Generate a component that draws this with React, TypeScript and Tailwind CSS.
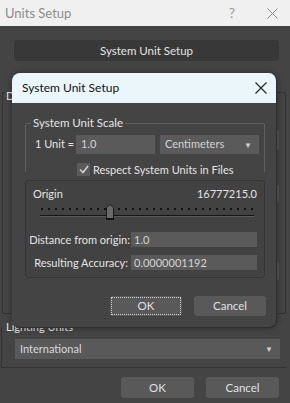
import React from "react";

const font = { fontFamily: 'Lato, "Liberation Sans", sans-serif' };

function Slider() {
  const dots = [];
  for (let x = 40; x <= 254; x += 7) dots.push(x);
  return (
    <svg width="240" height="20" viewBox="0 0 240 20" className="block">
      {dots.map((x) => (
        <rect key={x} x={x - 25} y={4} width={2} height={2} fill="#111" />
      ))}
      <rect x={14} y={11} width={214} height={1} fill="#151515" />
      <rect x={14} y={12} width={214} height={1} fill="#5a5a5a" />
      <path d="M80.5 3.5 L84 0.5 L87.5 3.5 L87.5 15.5 L80.5 15.5 Z" fill="#6a6a6a" stroke="#1a1a1a" strokeWidth="1" />
      <rect x={80} y={14} width={8} height={2} fill="#111" />
    </svg>
  );
}

export default function App() {
  return (
    <div
      className="relative w-[290px] h-[403px] overflow-hidden bg-[#444444] text-[#dedede] whitespace-nowrap"
      style={font}
    >
      {/* Window title bar */}
      <div className="h-[26px] bg-[#f0f0f0] flex items-center pl-[5px] pr-[12px]">
        <span className="text-[13px] text-[#8c8c8c] leading-none">Units Setup</span>
        <span className="ml-auto text-[14px] text-[#9a9a9a] leading-none mr-[32px]">?</span>
        <svg width="11" height="11" viewBox="0 0 11 11">
          <path d="M0.5 0.5 L10.5 10.5 M10.5 0.5 L0.5 10.5" stroke="#888" strokeWidth="1" />
        </svg>
      </div>

      {/* Main body */}
      <div className="flex flex-col">
        <div className="mx-[14px] mt-[14px] h-[21px] w-[265px] rounded-[3px] bg-[#383838] flex items-center justify-center text-[11.5px] text-[#e4e4e4]">
          System Unit Setup
        </div>

        {/* Display Unit Scale group (mostly hidden) */}
        <div className="relative mt-[31px] ml-[2px] w-[284px] h-[222px] border border-[#333333] rounded-[2px]">
          <span className="absolute -top-[6px] left-[2px] bg-[#444444] px-[1px] text-[11px] text-[#e4e4e4] leading-[18px]">
            Display Unit Scale
          </span>
          <div className="flex flex-col items-end pr-[6px] pt-[37px] gap-[35px]">
            <div className="w-[60px] h-[20px] bg-[#555555] rounded-[2px]" />
            <div className="w-[60px] h-[18px] bg-[#555555] rounded-[2px]" />
            <div className="w-[60px] h-[18px] bg-[#555555] rounded-[2px] mt-[24px]" />
          </div>
        </div>

        {/* Lighting Units group */}
        <div className="relative mt-[14px] ml-[1px] w-[286px] h-[40px] border-b border-l border-[#333333]">
          <span className="absolute -top-[10px] left-[4px] text-[11px] text-[#e4e4e4] leading-[18px]">
            Lighting Units
          </span>
          <div className="mt-[11px] ml-[13px] w-[265px] h-[20px] bg-[#595959] flex items-center pl-[5px] pr-[7px] text-[11px] text-[#d8d8d8]">
            International
            <span className="ml-auto text-[8px] text-[#cfcfcf]">▼</span>
          </div>
        </div>

        <div className="flex justify-end gap-[12px] mt-[9px] pr-[11px]">
          <div className="w-[73px] h-[21px] rounded-[3px] bg-[#595959] flex items-center justify-center text-[11.5px] text-[#e0e0e0]">
            OK
          </div>
          <div className="w-[73px] h-[21px] rounded-[3px] bg-[#595959] flex items-center justify-center text-[11.5px] text-[#e0e0e0]">
            Cancel
          </div>
        </div>
      </div>

      {/* Modal dialog */}
      <div className="absolute left-[12px] top-[73px] w-[265px] h-[255px] rounded-[8px] overflow-hidden bg-[#444444] border-r border-b border-[#2e2e2e] shadow-[0_0_6px_rgba(0,0,0,0.35)] flex flex-col">
        <div className="h-[30px] bg-[#eaf6f9] flex items-center pl-[10px] pr-[9px] shrink-0">
          <span className="text-[12px] text-[#111] leading-none">System Unit Setup</span>
          <svg className="ml-auto" width="12" height="12" viewBox="0 0 12 12">
            <path d="M0.5 0.5 L11.5 11.5 M11.5 0.5 L0.5 11.5" stroke="#222" strokeWidth="1.1" />
          </svg>
        </div>

        <div className="flex flex-col pl-[13px]">
          {/* System Unit Scale group */}
          <div className="relative mt-[20px] w-[240px] h-[49px] border-t border-l border-r border-[#5e5e5e] rounded-t-[2px]">
            <span className="absolute -top-[10px] left-[5px] bg-[#444444] px-[2px] text-[11.5px] text-[#e4e4e4] leading-[18px]">
              System Unit Scale
            </span>
            <div className="flex items-center mt-[11px] h-[19px]">
              <span className="ml-[9px] w-[41px] shrink-0 text-[11px] text-[#e4e4e4]">1 Unit =</span>
              <div className="w-[79px] h-[19px] shrink-0 bg-[#5a5a5a] flex items-center pl-[5px] text-[11px] text-[#d4d4d4]">
                1.0
              </div>
              <div className="ml-[5px] w-[99px] h-[19px] shrink-0 bg-[#5a5a5a] flex items-center pl-[5px] pr-[7px] text-[11px] text-[#d4d4d4]">
                Centimeters
                <span className="ml-auto text-[8px] text-[#cfcfcf]">▼</span>
              </div>
            </div>
            <div className="flex items-center mt-[9px] ml-[51px] h-[13px]">
              <div className="w-[13px] h-[13px] bg-[#5a5a5a] flex items-center justify-center shrink-0">
                <svg width="10" height="9" viewBox="0 0 10 9">
                  <path d="M1 4.5 L4 7.5 L9 1" stroke="#cfcfcf" strokeWidth="1.6" fill="none" />
                </svg>
              </div>
              <span className="ml-[3px] text-[11px] text-[#e4e4e4] leading-none">Respect System Units in Files</span>
            </div>
          </div>

          {/* Origin box */}
          <div className="mt-[8px] w-[240px] h-[98px] border border-[#363636] rounded-[3px] bg-[#424242] flex flex-col">
            <div className="flex items-center justify-between pl-[7px] pr-[7px] mt-[5px] h-[16px] text-[11px] text-[#e4e4e4]">
              <span>Origin</span>
              <span>16777215.0</span>
            </div>
            <div className="mt-[2px]">
              <Slider />
            </div>
            <div className="flex items-center mt-[8px] h-[15px]">
              <div className="w-[104px] shrink-0 flex justify-end text-[11px] text-[#e4e4e4] leading-none">
                <span>Distance from origin:</span>
              </div>
              <div className="ml-[1px] w-[126px] h-[15px] bg-[#5a5a5a] flex items-center pl-[3px] text-[11px] text-[#d4d4d4] leading-none">
                1.0
              </div>
            </div>
            <div className="flex items-center mt-[8px] h-[15px]">
              <div className="w-[102px] shrink-0 flex justify-end text-[11px] text-[#e4e4e4] leading-none">
                <span>Resulting Accuracy:</span>
              </div>
              <div className="ml-[3px] w-[126px] h-[15px] bg-[#5a5a5a] flex items-center pl-[3px] text-[11px] text-[#d4d4d4] leading-none">
                0.0000001192
              </div>
            </div>
          </div>

          {/* Buttons */}
          <div className="flex mt-[18px] ml-[85px] gap-[12px]">
            <div className="w-[72px] h-[20px] rounded-[3px] bg-[#595959] p-[1px]">
              <div className="w-full h-full border border-dotted border-[#d0d0d0] flex items-center justify-center text-[11.5px] text-[#e0e0e0]">
                OK
              </div>
            </div>
            <div className="w-[72px] h-[20px] rounded-[3px] bg-[#595959] flex items-center justify-center text-[11.5px] text-[#e0e0e0]">
              Cancel
            </div>
          </div>
        </div>
      </div>
    </div>
  );
}
